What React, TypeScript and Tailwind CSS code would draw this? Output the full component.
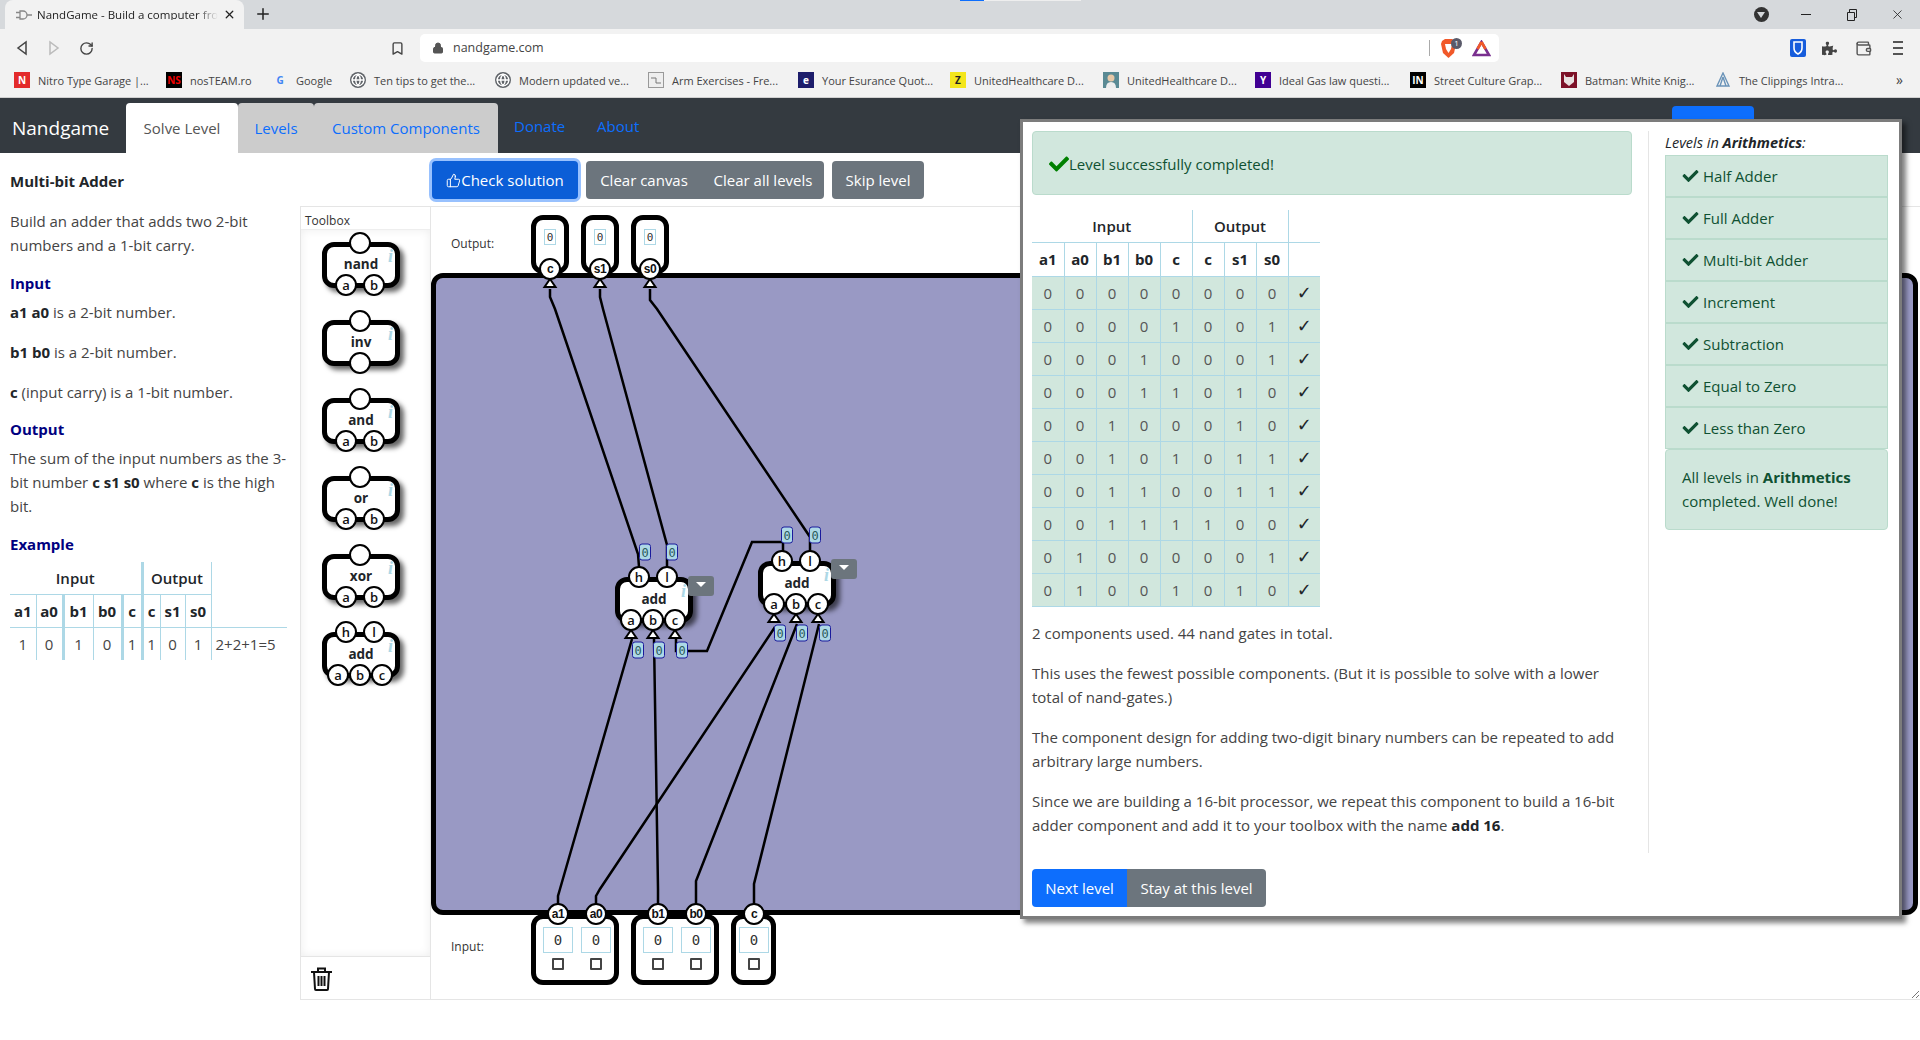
import React from "react";
import { Bookmark, Globe, Lock, Plus, RotateCw, ThumbsUp, Wallet, X } from "lucide-react";
import { FaCheck, FaPuzzlePiece } from "react-icons/fa";

const OX = 431;
const OY = 208;
const at = (x: number, y: number) => ({ left: x - OX, top: y - OY });

type Pin = { l: string; x: number; y: number };

function PinDot({ l, x, y, bold }: Pin & { bold?: boolean }) {
  return (
    <div
      className={`absolute z-20 flex h-[22px] w-[22px] -translate-x-1/2 -translate-y-1/2 items-center justify-center rounded-full border-2 border-black bg-white leading-none text-[#111] ${bold ? "font-['Liberation_Sans',sans-serif] text-[12px] font-bold tracking-[-0.5px]" : "font-['Open_Sans',sans-serif] text-[13px] font-semibold"}`}
      style={{ left: x, top: y }}
    >
      {l}
    </div>
  );
}

function Gate({ name, pins }: { name: string; pins: Pin[] }) {
  return (
    <div className="relative h-[46px] w-[78px]">
      <div className="flex h-full w-full items-center justify-center rounded-[12px] border-[5px] border-black bg-white shadow-[4px_4px_5px_rgba(0,0,0,0.6)]">
        <span className="text-[13.5px] font-bold leading-none text-[#212529]">{name}</span>
      </div>
      <span className="absolute left-[66px] top-[5px] font-['Liberation_Serif',serif] text-[18px] font-bold italic leading-none text-[#add8e6]">i</span>
      {pins.map((p) => (
        <PinDot key={p.l + p.x + p.y} {...p} />
      ))}
    </div>
  );
}

const P2: Pin[] = [
  { l: "", x: 38, y: 1 },
  { l: "a", x: 24, y: 43 },
  { l: "b", x: 52, y: 43 },
];
const ADD: Pin[] = [
  { l: "h", x: 24, y: 0 },
  { l: "l", x: 52, y: 0 },
  { l: "a", x: 16, y: 43 },
  { l: "b", x: 38, y: 43 },
  { l: "c", x: 60, y: 43 },
];

function Tag({ x, y }: { x: number; y: number }) {
  return (
    <div
      className="absolute z-30 flex h-[17px] w-[12px] -translate-x-1/2 -translate-y-1/2 items-center justify-center rounded-[3px] border border-[#1a1a9c] bg-[#add8e6] font-['DejaVu_Sans_Mono',monospace] text-[12px] leading-none text-[#2b5a5a]"
      style={at(x, y)}
    >
      0
    </div>
  );
}

function Menu({ x, y }: { x: number; y: number }) {
  return (
    <div className="absolute z-30 flex h-[20px] w-[26px] items-center justify-center rounded-[3px] bg-[#6c757d]" style={at(x, y)}>
      <div className="mb-[3px] h-0 w-0 border-x-[5px] border-t-[5px] border-x-transparent border-t-white" />
    </div>
  );
}

function OutBox({ x, l }: { x: number; l: string }) {
  return (
    <div className="absolute z-10 h-[59px] w-[38px] rounded-[12px] border-[5px] border-black bg-white" style={at(x, 216)}>
      <div className="mx-auto mt-[9px] flex h-[16px] w-[12px] items-center justify-center border border-[#add8e6] font-['DejaVu_Sans_Mono',monospace] text-[11px] leading-none text-[#333]">0</div>
      <PinDot l={l} x={14} y={49} bold />
    </div>
  );
}

function InSlot({ l }: { l: string }) {
  return (
    <div className="relative flex w-[30px] flex-col items-center">
      <PinDot l={l} x={15} y={-13} bold />
      <div className="flex h-[26px] w-[30px] items-center justify-center border border-[#add8e6] font-['DejaVu_Sans_Mono',monospace] text-[14px] leading-none text-[#333]">0</div>
      <div className="mt-[5px] h-[12px] w-[12px] rounded-[1px] border-2 border-[#444] bg-white" />
    </div>
  );
}

function InBox({ x, w, ls }: { x: number; w: number; ls: string[] }) {
  return (
    <div className="absolute z-10 flex h-[71px] gap-[8px] rounded-[12px] border-[5px] border-black bg-white pl-[7px] pt-[8px] shadow-none" style={{ ...at(x, 915), width: w, paddingLeft: ls.length > 1 ? 7 : 3 }}>
      {ls.map((l) => (
        <InSlot key={l} l={l} />
      ))}
    </div>
  );
}

function Wires() {
  const lines = [
    "550,290 550,298 555,310 638,555 639,568",
    "600,290 600,298 603,310 667,546 667,568",
    "650,290 650,301 657,310 810,538 810,552",
    "558,905 558,897 560,890 632,640",
    "596,905 596,897 600,890 775,628",
    "658,905 658,890 654,640",
    "696,905 696,882 797,625",
    "754,905 754,885 819,625",
    "676,640 676,652 707,652 752,543 783,543 783,552",
  ];
  const tris = [
    [550, 285], [600, 285], [650, 285],
    [631, 636], [653, 636], [675, 636],
    [774, 620], [796, 620], [818, 620],
  ];
  return (
    <svg className="absolute left-0 top-0 z-[5] h-[792px] w-[1489px]" viewBox="431 208 1489 792">
      {lines.map((d) => (
        <polyline key={d} points={d} fill="none" stroke="#000" strokeWidth="2.5" />
      ))}
      {tris.map(([x, y]) => (
        <polygon key={x} points={`${x},${y - 5} ${x + 5.5},${y + 3} ${x - 5.5},${y + 3}`} fill="#fff" stroke="#000" strokeWidth="2" />
      ))}
    </svg>
  );
}

function Canvas() {
  return (
    <div className="relative flex-1 overflow-hidden font-['Open_Sans',sans-serif]">
      <div className="absolute h-[642px] w-[1487px] rounded-[12px] border-[5px] border-black bg-[#9999c4]" style={at(431, 274)} />
      <Wires />
      <span className="absolute text-[12px] leading-none text-[#333]" style={at(451, 239)}>Output:</span>
      <OutBox x={531} l="c" />
      <OutBox x={581} l="s1" />
      <OutBox x={631} l="s0" />
      <div className="absolute z-10" style={at(615, 578)}><Gate name="add" pins={ADD} /></div>
      <div className="absolute z-10" style={at(758, 562)}><Gate name="add" pins={ADD} /></div>
      <Menu x={688} y={577} />
      <Menu x={831} y={560} />
      {[[645, 553], [672, 553], [638, 651], [659, 651], [682, 651], [787, 536], [815, 536], [780, 634], [802, 634], [825, 634]].map(([x, y]) => (
        <Tag key={x} x={x} y={y} />
      ))}
      <span className="absolute text-[12px] leading-none text-[#333]" style={at(451, 942)}>Input:</span>
      <InBox x={531} w={88} ls={["a1", "a0"]} />
      <InBox x={631} w={88} ls={["b1", "b0"]} />
      <InBox x={731} w={45} ls={["c"]} />
      <svg className="absolute bottom-0 right-0 h-[10px] w-[10px]" viewBox="0 0 10 10">
        <path d="M9 2 2 9M9 6 6 9" stroke="#777" strokeWidth="1" />
      </svg>
    </div>
  );
}

function Toolbox() {
  const gates: [string, Pin[]][] = [
    ["nand", P2],
    ["inv", [{ l: "", x: 38, y: 1 }, { l: "", x: 38, y: 43 }]],
    ["and", P2],
    ["or", P2],
    ["xor", P2],
    ["add", ADD],
  ];
  return (
    <div className="flex w-[131px] flex-col border-x border-[#e5e5e5]">
      <div className="h-[23px] border-b border-[#eee] pl-[4px] pt-[6px] text-[12px] leading-[16px] text-[#333]">Toolbox</div>
      <div className="flex flex-1 flex-col gap-[32px] pl-[21px] pt-[12px] shadow-[inset_0_0_10px_rgba(0,0,0,0.07)]">
        {gates.map(([n, p]) => (
          <Gate key={n} name={n} pins={p} />
        ))}
      </div>
      <div className="flex h-[43px] items-center border-t border-[#e5e5e5] pl-[10px] pt-[2px]">
        <svg width="21" height="24" viewBox="0 0 21 24" fill="none" stroke="#111" strokeWidth="2">
          <path d="M0 5h21M7 4V1.500h7V4M3 5l1 17a1 1 0 0 0 1 1h11a1 1 0 0 0 1-1l1-17M7.500 9v10M10.500 9v10M13.500 9v10" />
        </svg>
      </div>
    </div>
  );
}

type Mark = { w: number; t: string; c: string; g: React.ReactNode; f: string };
const globe = <Globe className="h-[14px] w-[14px] text-white" strokeWidth={2.4} />;
const bookmarks: Mark[] = [
  { w: 152, t: "Nitro Type Garage |...", c: "bg-[#e32b2b]", g: "N", f: "text-white" },
  { w: 106, t: "nosTEAM.ro", c: "bg-black", g: "NS", f: "text-[#e00]" },
  { w: 78, t: "Google", c: "bg-transparent", g: "G", f: "text-[#4285f4]" },
  { w: 145, t: "Ten tips to get the...", c: "bg-[#5f6368] rounded-full", g: globe, f: "" },
  { w: 153, t: "Modern updated ve...", c: "bg-[#5f6368] rounded-full", g: globe, f: "" },
  {
    w: 150,
    t: "Arm Exercises - Fre...",
    c: "bg-[#eee] border border-[#999]",
    g: <svg width="12" height="12" viewBox="0 0 12 12" fill="none" stroke="#777"><path d="M1 4h5v5h5" /></svg>,
    f: "",
  },
  { w: 152, t: "Your Esurance Quot...", c: "bg-[#1d1d6b]", g: "e", f: "text-white" },
  { w: 153, t: "UnitedHealthcare D...", c: "bg-[#f4e61c]", g: "Z", f: "text-[#222]" },
  {
    w: 152,
    t: "UnitedHealthcare D...",
    c: "bg-[#5a8a94]",
    g: <svg width="16" height="16" viewBox="0 0 16 16"><circle cx="8" cy="6" r="3.500" fill="#e8c9a8" /><path d="M3 16q0-6 5-6t5 6z" fill="#eee" /></svg>,
    f: "",
  },
  { w: 155, t: "Ideal Gas law questi...", c: "bg-[#410093]", g: "Y", f: "text-white" },
  { w: 151, t: "Street Culture Grap...", c: "bg-black", g: "IN", f: "text-white" },
  {
    w: 154,
    t: "Batman: White Knig...",
    c: "bg-[#7d1128]",
    g: <svg width="12" height="14" viewBox="0 0 12 14"><path d="M1 1l2 3h6l2-3v8l-5 4-5-4z" fill="#e8e0e0" /></svg>,
    f: "",
  },
  {
    w: 150,
    t: "The Clippings Intra...",
    c: "bg-transparent",
    g: <svg width="16" height="16" viewBox="0 0 16 16" fill="none" stroke="#6a93b8" strokeWidth="1.400"><path d="M8 1 14 14H2zM8 5l-3 9M8 5l3 9" /></svg>,
    f: "",
  },
];

function BrowserChrome() {
  return (
    <div className="h-[98px] border-b border-[#d0d0d0] bg-[#f2f2f2] text-[#444] font-['Open_Sans',sans-serif]">
      <div className="flex h-[29px] items-end bg-[#d6d9dc] pl-[5px]">
        <div className="flex h-[29px] w-[239px] items-center rounded-t-[8px] bg-[#f2f2f2] pl-[11px] pr-[8px]">
          <svg width="16" height="12" viewBox="0 0 16 12" fill="none" stroke="#888" strokeWidth="1.3">
            <path d="M0 3.500h4M0 8.500h4M4 2h3a4 4 0 0 1 0 8H4zM11 6h5" />
          </svg>
          <span className="ml-[5px] whitespace-nowrap text-[11.500px] leading-none text-[#222] [mask-image:linear-gradient(to_right,black_88%,transparent)]">NandGame - Build a computer fro</span>
          <X className="ml-auto h-[13px] w-[13px] shrink-0 text-[#222]" strokeWidth={2.4} />
        </div>
        <Plus className="mb-[6px] ml-[10px] h-[18px] w-[18px] text-[#222]" strokeWidth={2} />
        <div className="ml-auto mr-[15px] flex h-[29px] items-center">
          <div className="relative h-[15px] w-[15px] rounded-full bg-[#333]">
            <div className="absolute left-[3px] top-[5px] h-0 w-0 border-x-[4.500px] border-t-[6px] border-x-transparent border-t-[#d6d9dc]" />
          </div>
          <div className="ml-[32px] h-px w-[10px] bg-[#222]" />
          <svg className="ml-[35px]" width="12" height="12" viewBox="0 0 12 12" fill="none" stroke="#222"><path d="M1.500 3.500h7v8h-7zM3.500 3.500v-3h7v8h-2" /></svg>
          <X className="ml-[32px] h-[15px] w-[15px] text-[#222]" strokeWidth={1.3} />
        </div>
      </div>
      <div className="flex h-[38px] items-center">
        <svg className="ml-[16px]" width="12" height="16" viewBox="0 0 12 16" fill="none" stroke="#444" strokeWidth="1.500"><path d="M10 2v12L2 8z" /></svg>
        <svg className="ml-[20px]" width="12" height="16" viewBox="0 0 12 16" fill="none" stroke="#bbb" strokeWidth="1.500"><path d="M2 2v12l8-6z" /></svg>
        <RotateCw className="ml-[19px] h-[15px] w-[15px] text-[#444]" strokeWidth={2.2} />
        <Bookmark className="ml-[296px] h-[15px] w-[15px] text-[#444]" strokeWidth={2.2} />
        <div className="ml-[15px] flex h-[28px] w-[1079px] items-center rounded-[5px] bg-white pl-[12px]">
          <Lock className="h-[12px] w-[12px] fill-[#555] text-[#555]" />
          <span className="ml-[9px] text-[12.500px] leading-none text-[#444]">nandgame.com</span>
          <div className="ml-auto h-[16px] w-px bg-[#aaa]" />
          <div className="relative ml-[11px] mr-[8px] h-[19px] w-[15px]">
            <svg width="15" height="19" viewBox="0 0 15 19"><path d="M1 2 4 0h7l3 2 1 3-2 9-5.500 5L2 14 0 5z" fill="#f1592a" /><path d="M4 5h7l-1 5-2.500 4L5 10z" fill="#fff" /></svg>
            <span className="absolute -right-[6px] -top-[1px] flex h-[11px] w-[11px] items-center justify-center rounded-full bg-[#5a5a6a] text-[8px] leading-none text-white">1</span>
          </div>
          <svg className="ml-[8px]" width="19" height="17" viewBox="0 0 19 17" fill="none" strokeWidth="2.600"><path d="M9.500 2 2 15h15z" stroke="#7a2f8f" /><path d="M9.500 2 5.500 9M9.500 2l4 7" stroke="#f1592a" /></svg>
          <span className="w-[8px]" />
        </div>
        <svg className="ml-[291px]" width="16" height="18" viewBox="0 0 16 18"><rect width="16" height="18" rx="2" fill="#175ddc" /><path d="M4 3h8v6q0 4-4 6-4-2-4-6z" fill="none" stroke="#fff" strokeWidth="1.600" /></svg>
        <FaPuzzlePiece className="ml-[16px] h-[15px] w-[15px] text-[#444]" />
        <Wallet className="ml-[18px] h-[17px] w-[17px] text-[#555]" strokeWidth={2} />
        <div className="ml-[21px] flex flex-col gap-[4px]">
          <div className="h-[2px] w-[10px] bg-[#555]" />
          <div className="h-[2px] w-[10px] bg-[#555]" />
          <div className="h-[2px] w-[10px] bg-[#555]" />
        </div>
      </div>
      <div className="flex h-[26px] items-center pl-[14px]">
        {bookmarks.map((b, i) => (
          <div key={i} className="flex shrink-0 items-center" style={{ width: b.w }}>
            <div className={`flex h-[16px] w-[16px] shrink-0 items-center justify-center overflow-hidden text-[10px] font-bold leading-none ${b.c} ${b.f}`}>{b.g}</div>
            <span className="ml-[8px] whitespace-nowrap text-[11px] leading-none text-[#444]">{b.t}</span>
          </div>
        ))}
        <span className="ml-[31px] text-[14px] leading-none text-[#444]">»</span>
      </div>
    </div>
  );
}

function Nav() {
  return (
    <div className="flex h-[55px] items-end bg-[#343a40] text-[15px] font-['Open_Sans',sans-serif]">
      <div className="flex h-[50px] w-[126px] items-center pl-[12px] text-[19px] leading-none text-white">Nandgame</div>
      <div className="flex h-[50px] w-[112px] items-center justify-center rounded-t-[4px] bg-white text-[#555]">Solve Level</div>
      <div className="flex h-[50px] w-[76px] items-center justify-center rounded-t-[4px] bg-[#ccc] text-[#0d6efd]">Levels</div>
      <div className="flex h-[50px] w-[184px] items-center justify-center rounded-t-[4px] bg-[#ccc] text-[#0d6efd]">Custom Components</div>
      <div className="mb-[2px] flex h-[50px] w-[99px] items-center pl-[16px] text-[#0d6efd]">Donate</div>
      <div className="mb-[2px] flex h-[50px] items-center text-[#0d6efd]">About</div>
      <div className="mb-[9px] ml-auto mr-[166px] h-[38px] w-[82px] rounded-[4px] bg-[#0d6efd]" />
    </div>
  );
}

const td = "border border-[#add8e6] text-center";

function ExampleTable() {
  const vals = ["1", "0", "1", "0", "1", "1", "0", "1"];
  const heads = ["a1", "a0", "b1", "b0", "c", "c", "s1", "s0"];
  const widths = ["w-[26px]", "w-[27px]", "w-[30px]", "w-[29px]", "w-[20px]", "w-[18px]", "w-[25px]", "w-[26px]"];
  const thick = [false, true, false, true, true, false, false, false];
  return (
    <table className="mt-[6px] table-fixed border-collapse text-[15px]">
      <tbody>
        <tr className="h-[32px]">
          <th colSpan={5} className="border-b border-[#add8e6] font-semibold text-[#212529]">Input</th>
          <th colSpan={3} className="border-x border-x-[#add8e6] border-l-[3px] border-b border-b-[#add8e6] font-semibold text-[#212529]">Output</th>
        </tr>
        <tr className="h-[33px]">
          {heads.map((h, i) => (
            <th key={i} className={`${widths[i]} border-b border-r border-[#add8e6] p-0 font-bold text-[#212529] ${thick[i] ? "border-r-[3px]" : ""}`}>{h}</th>
          ))}
          <th className="w-[76px] border-b border-[#add8e6]" />
        </tr>
        <tr className="h-[33px]">
          {vals.map((h, i) => (
            <td key={i} className={`border-r border-[#add8e6] p-0 text-center text-[#444] ${thick[i] ? "border-r-[3px]" : ""}`}>{h}</td>
          ))}
          <td className="whitespace-nowrap pl-[4px] text-[#444]">2+2+1=5</td>
        </tr>
      </tbody>
    </table>
  );
}

function LeftPane() {
  const h = "text-[15px] font-bold leading-[24px] text-[#000080]";
  return (
    <div className="w-[300px] pl-[10px] pr-[8px] pt-[16px] text-[15px] leading-[24px] text-[#444] font-['Open_Sans',sans-serif]">
      <h1 className="font-bold text-[#212529]">Multi-bit Adder</h1>
      <p className="mt-[16px]">Build an adder that adds two 2-bit numbers and a 1-bit carry.</p>
      <h2 className={`mt-[14px] ${h}`}>Input</h2>
      <p className="mt-[5px]"><b className="text-[#212529]">a1 a0</b> is a 2-bit number.</p>
      <p className="mt-[16px]"><b className="text-[#212529]">b1 b0</b> is a 2-bit number.</p>
      <p className="mt-[16px]"><b className="text-[#212529]">c</b> (input carry) is a 1-bit number.</p>
      <h2 className={`mt-[13px] ${h}`}>Output</h2>
      <p className="mt-[5px]">The sum of the input numbers as the 3-bit number <b className="text-[#212529]">c s1 s0</b> where <b className="text-[#212529]">c</b> is the high bit.</p>
      <h2 className={`mt-[14px] ${h}`}>Example</h2>
      <ExampleTable />
    </div>
  );
}

const RESULT = ["00000000", "00001001", "00010001", "00011010", "00100010", "00101011", "00110011", "00111100", "01000001", "01001010"];

function ResultTable() {
  const heads = ["a1", "a0", "b1", "b0", "c", "c", "s1", "s0"];
  return (
    <table className="mt-[15px] w-[288px] table-fixed border-collapse text-[15px]">
      <tbody>
        <tr className="h-[32px]">
          <th colSpan={5} className="border-b border-r border-[#add8e6] font-semibold text-[#212529]">Input</th>
          <th colSpan={3} className="border-b border-r border-[#add8e6] font-semibold text-[#212529]">Output</th>
          <th className="border-b border-[#add8e6]" />
        </tr>
        <tr className="h-[34px]">
          {heads.map((h, i) => (
            <th key={i} className={`${td} border-t-0 first:border-l-0 font-bold text-[#212529]`}>{h}</th>
          ))}
          <th className="border-b border-[#add8e6]" />
        </tr>
        {RESULT.map((r, ri) => (
          <tr key={ri} className="h-[33px] bg-[#d1e7dd]">
            {r.split("").map((c, i) => (
              <td key={i} className={`${td} first:border-l-0 p-0 text-[#555]`}>{c}</td>
            ))}
            <td className={`${td} border-r-0 p-0 font-['DejaVu_Sans',sans-serif] text-[18px] leading-none text-[#212529]`}>✓</td>
          </tr>
        ))}
      </tbody>
    </table>
  );
}

function Modal() {
  const levels = ["Half Adder", "Full Adder", "Multi-bit Adder", "Increment", "Subtraction", "Equal to Zero", "Less than Zero"];
  return (
    <div className="absolute left-[1020px] top-[119px] z-50 h-[800px] w-[882px] border-[3px] border-[#7c7c7c] bg-white pl-[9px] pt-[9px] text-[15px] leading-[24px] text-[#444] shadow-[4px_4px_5px_rgba(0,0,0,0.5)] font-['Open_Sans',sans-serif]">
      <div className="flex">
        <div className="h-[722px] w-[617px] border-r border-[#e5e5e5] pr-[16px]">
          <div className="flex h-[64px] w-[600px] items-center rounded-[4px] border border-[#badbcc] bg-[#d1e7dd] pl-[16px] pt-[2px] text-[#0f5132]">
            <FaCheck className="h-[20px] w-[20px] shrink-0 text-[#008000]" />
            <span>Level successfully completed!</span>
          </div>
          <ResultTable />
          <p className="mt-[14px]">2 components used. 44 nand gates in total.</p>
          <p className="mt-[16px]">This uses the fewest possible components. (But it is possible to solve with a lower total of nand-gates.)</p>
          <p className="mt-[16px]">The component design for adding two-digit binary numbers can be repeated to add arbitrary large numbers.</p>
          <p className="mt-[16px]">Since we are building a 16-bit processor, we repeat this component to build a 16-bit adder component and add it to your toolbox with the name <b className="text-[#212529]">add 16</b>.</p>
        </div>
        <div className="w-[239px] pl-[16px]">
          <p className="text-[14.500px] italic text-[#212529]">Levels in <b>Arithmetics</b>:</p>
          <div>
            {levels.map((l) => (
              <div key={l} className="flex h-[42px] items-center border border-[#badbcc] bg-[#d1e7dd] pl-[16px] text-[#0f5132]">
                <FaCheck className="mr-[4px] h-[16px] w-[17px] shrink-0" />
                {l}
              </div>
            ))}
          </div>
          <div className="rounded-[4px] border border-[#badbcc] bg-[#d1e7dd] px-[16px] pb-[16px] pt-[15px] text-[#0f5132]">
            All levels in <b>Arithmetics</b> completed. Well done!
          </div>
        </div>
      </div>
      <div className="mt-[16px] flex h-[38px] w-[234px] overflow-hidden rounded-[4px] text-white">
        <div className="flex w-[95px] items-center justify-center bg-[#0d6efd]">Next level</div>
        <div className="flex w-[139px] items-center justify-center bg-[#6c757d]">Stay at this level</div>
      </div>
    </div>
  );
}

function Toolbar() {
  return (
    <div className="flex h-[54px] gap-[8px] border-b border-[#e5e5e5] pl-[132px] pt-[8px] text-[15px] text-white font-['Open_Sans',sans-serif]">
      <div className="flex h-[38px] w-[146px] items-center justify-center rounded-[4px] bg-[#0b5ed7] shadow-[0_0_0_3px_#98c1fe]">
        <ThumbsUp className="h-[15px] w-[15px]" strokeWidth={1.6} />
        Check solution
      </div>
      <div className="flex h-[38px] w-[238px] rounded-[4px] bg-[#6c757d]">
        <div className="flex w-[116px] items-center justify-center">Clear canvas</div>
        <div className="flex flex-1 items-center justify-center">Clear all levels</div>
      </div>
      <div className="flex h-[38px] w-[92px] items-center justify-center rounded-[4px] bg-[#6c757d]">Skip level</div>
    </div>
  );
}

export default function App() {
  return (
    <div className="relative h-[1040px] w-[1920px] overflow-hidden bg-white">
      <div className="absolute left-[960px] top-0 z-10 h-px w-[24px] bg-[#0d6efd]" />
      <div className="absolute left-[984px] top-0 z-10 h-px w-[97px] bg-[#eee]" />
      <BrowserChrome />
      <Nav />
      <div className="flex h-[848px]">
        <LeftPane />
        <div className="flex h-[848px] w-[1620px] flex-col">
          <Toolbar />
          <div className="flex h-[793px] border-b border-[#e5e5e5] text-[#333] font-['Open_Sans',sans-serif]">
            <Toolbox />
            <Canvas />
          </div>
        </div>
      </div>
      <Modal />
    </div>
  );
}
